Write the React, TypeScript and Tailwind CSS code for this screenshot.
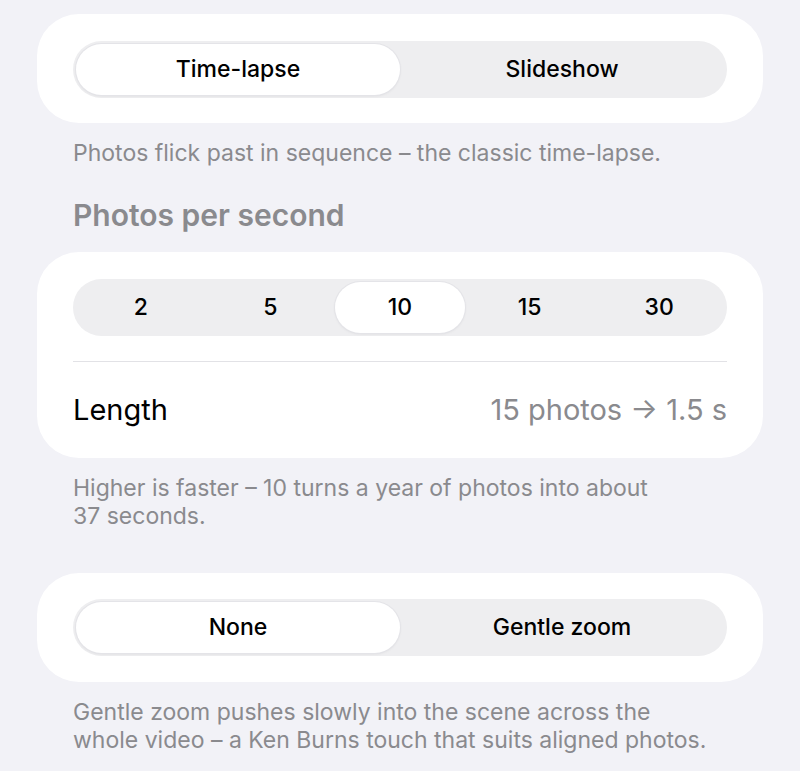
import { useState } from "react";

function Segmented({
  options,
  value,
  onChange,
}: {
  options: string[];
  value: string;
  onChange: (v: string) => void;
}) {
  return (
    <div className="flex h-[57px] rounded-full bg-[#eeeef0] p-[3px]">
      {options.map((o) => (
        <button
          key={o}
          onClick={() => onChange(o)}
          className={
            "flex-1 rounded-full text-[23px] font-medium text-black " +
            (o === value
              ? "bg-white shadow-[0_1px_3px_rgba(0,0,0,0.08)] ring-1 ring-[#e4e4e8]"
              : "")
          }
        >
          {o}
        </button>
      ))}
    </div>
  );
}

export default function App() {
  const [mode, setMode] = useState("Time-lapse");
  const [fps, setFps] = useState("10");
  const [motion, setMotion] = useState("None");

  return (
    <div
      className="min-h-[771px] bg-[#f2f2f7] px-[37px] pt-[14px]"
      style={{ fontFamily: "Inter, 'Noto Sans', sans-serif" }}
    >
      {/* mode */}
      <div className="rounded-[42px] bg-white px-[36px] pt-[27px] pb-[25px]">
        <Segmented
          options={["Time-lapse", "Slideshow"]}
          value={mode}
          onChange={setMode}
        />
      </div>
      <p className="mt-[16px] px-[36px] text-[23px] leading-[28.5px] text-[#8a8a8e]">
        Photos flick past in sequence – the classic time-lapse.
      </p>

      {/* photos per second */}
      <div className="mt-[29px] px-[36px] text-[30px] font-semibold leading-[36px] text-[#8a8a8e]">
        Photos per second
      </div>
      <div className="mt-[19px] rounded-[42px] bg-white px-[36px] pt-[27px]">
        <Segmented
          options={["2", "5", "10", "15", "30"]}
          value={fps}
          onChange={setFps}
        />
        <div className="mt-[25px] h-px bg-[#e2e2e6]" />
        <div className="flex h-[96px] items-center justify-between">
          <span className="text-[29px] text-black">Length</span>
          <span className="text-[29px] text-[#8a8a8e]">15 photos → 1.5 s</span>
        </div>
      </div>
      <p className="mt-[16px] px-[36px] text-[23px] leading-[28.5px] text-[#8a8a8e]">
        Higher is faster – 10 turns a year of photos into about
        <br />
        37 seconds.
      </p>

      {/* motion */}
      <div className="mt-[42px] rounded-[42px] bg-white px-[36px] pt-[26px] pb-[26px]">
        <Segmented
          options={["None", "Gentle zoom"]}
          value={motion}
          onChange={setMotion}
        />
      </div>
      <p className="mt-[16px] px-[36px] text-[23px] leading-[28.5px] text-[#8a8a8e]">
        Gentle zoom pushes slowly into the scene across the
        <br />
        whole video – a Ken Burns touch that suits aligned photos.
      </p>
    </div>
  );
}
